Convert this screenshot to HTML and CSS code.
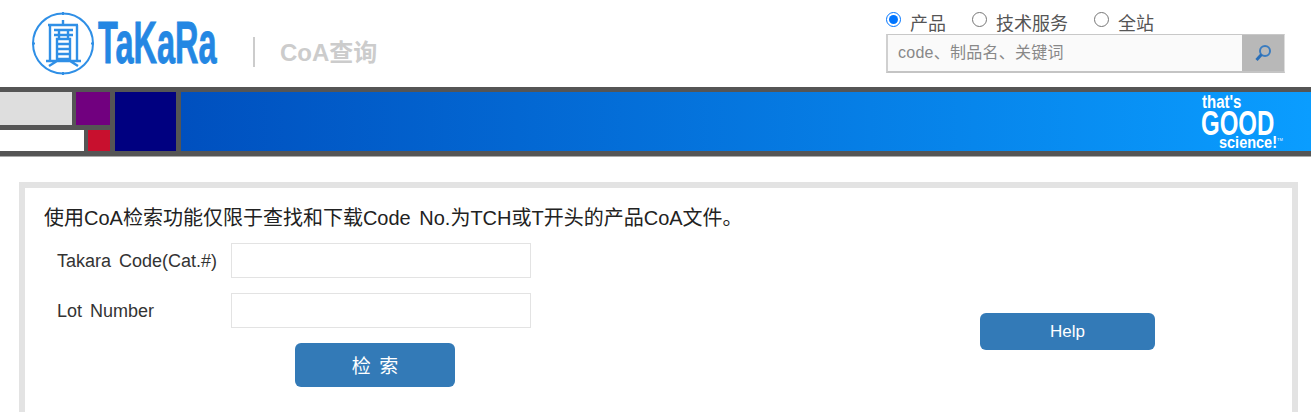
FILE: index.html
```html
<!DOCTYPE html>
<html>
<head>
    <meta charset="utf-8">
    <title>CoA查询</title>
    <link rel="stylesheet" href="styles.css">
</head>
<body>
    <div class="header">
        <svg class="logo" width="190" height="64" viewBox="0 0 190 64">
            <g class="emblem">
                <circle cx="33" cy="32.5" r="30"/>
                <path class="emblem-ticks" d="M33 1v3M33 61v3M2 32.5h3M61 32.5h3"/>
                <path class="emblem-glyph" d="M33 9v5M18 14h30M20 14v36M47 14v36M24 19h19M24 24h19M29 19v8M38 19v8M27 28h13v20h-13zM27 33h13M27 38h13M27 43h13M16 50h35M27 50l-8 5M40 50l8 5"/>
            </g>
            <text class="logo-word" transform="translate(68 52) scale(1 1.8)">TaKaRa</text>
        </svg>
        <div class="divider"></div>
        <div class="page-title">CoA查询</div>
        <div class="search">
            <div class="scope">
                <label class="scope-item"><input type="radio" name="scope" checked>产品</label>
                <label class="scope-item"><input type="radio" name="scope">技术服务</label>
                <label class="scope-item"><input type="radio" name="scope">全站</label>
            </div>
            <div class="search-box">
                <input class="search-input" type="text" placeholder="code、制品名、关键词">
                <div class="search-btn">
                    <svg width="18" height="18" viewBox="0 0 18 18">
                        <circle cx="11" cy="7" r="5" class="lens"/>
                        <path d="M7.5 10.5L2.5 16" class="handle"/>
                    </svg>
                </div>
            </div>
        </div>
    </div>

    <div class="banner">
        <div class="tiles">
            <div class="tile tile-grey"></div>
            <div class="tile tile-purple"></div>
            <div class="tile tile-white"></div>
            <div class="tile tile-red"></div>
        </div>
        <div class="tile-navy"></div>
        <div class="banner-main">
            <svg class="slogan" width="84" height="59" viewBox="0 0 84 59">
                <text class="slogan-that" transform="translate(2 16) scale(1 1.2)">that's</text>
                <text class="slogan-good" transform="translate(1 43) scale(1 1.45)">GOOD</text>
                <text class="slogan-science" transform="translate(19 56) scale(1 1.1)">science!</text>
                <text class="slogan-tm" x="77" y="49">TM</text>
            </svg>
        </div>
    </div>

    <div class="panel">
        <p class="notice">使用CoA检索功能仅限于查找和下载Code No.为TCH或T开头的产品CoA文件。</p>
        <div class="panel-body">
            <form class="coa-form">
                <div class="form-row">
                    <label class="form-label">Takara Code(Cat.#)</label>
                    <input class="form-input" type="text">
                </div>
                <div class="form-row">
                    <label class="form-label">Lot Number</label>
                    <input class="form-input" type="text">
                </div>
                <button class="btn btn-search" type="button">检 索</button>
            </form>
            <button class="btn btn-help" type="button">Help</button>
        </div>
    </div>
</body>
</html>
```

FILE: styles.css
```css
html, body {
    margin: 0;
    height: 412px;
    overflow: hidden;
    background: #ffffff;
}

body {
    font-family: "Liberation Sans", "Noto Sans CJK SC", sans-serif;
}

.header {
    display: flex;
    height: 87px;
    box-sizing: border-box;
    padding-left: 30px;
}

.logo {
    margin-top: 11px;
}

.logo .emblem {
    fill: none;
    stroke: #2f8fe6;
    stroke-width: 2;
}

.emblem-glyph {
    stroke-width: 2.4;
}

.logo-word {
    font-family: "Liberation Sans", sans-serif;
    font-size: 32.5px;
    font-weight: bold;
    fill: #2487e3;
    stroke: #2487e3;
    stroke-width: 0.5;
}

.divider {
    width: 2px;
    height: 30px;
    margin: 37px 0 0 33px;
    background: #cccccc;
}

.page-title {
    margin: 37px 0 0 25px;
    font-size: 24px;
    line-height: 32px;
    font-weight: bold;
    color: #cccccc;
}

.search {
    margin-left: auto;
    margin-right: 26px;
    width: 399px;
}

.scope {
    display: flex;
    height: 34px;
    padding-top: 10px;
    box-sizing: border-box;
    gap: 26px;
}

.scope-item {
    display: flex;
    align-items: center;
    height: 24px;
    font-size: 18px;
    color: #555555;
}

.scope-item input {
    width: 15px;
    height: 15px;
    margin: 0 9px 5px 0;
}

.search-box {
    display: flex;
    height: 39px;
    box-sizing: border-box;
    border: 1px solid #dddddd;
    border-top-color: #c8c8c8;
    border-left: 2px solid #d0d0d0;
    border-bottom: 2px solid #c4c4c4;
}

.search-input {
    flex: 1;
    min-width: 0;
    padding: 0 0 1px 10px;
    border: 0;
    outline: 0;
    font-family: inherit;
    font-size: 16px;
    letter-spacing: 0.25px;
    background-color: #fafafa;
}

.search-input::placeholder {
    color: #888888;
}

.search-btn {
    display: flex;
    align-items: center;
    justify-content: center;
    width: 42px;
    background: #b8b8b8;
}

.lens {
    fill: none;
    stroke: #3a7cc0;
    stroke-width: 2;
}

.handle {
    fill: none;
    stroke: #2a6fb8;
    stroke-width: 3;
}

.banner {
    display: flex;
    gap: 5px;
    height: 70px;
    box-sizing: border-box;
    padding: 5px 0;
    background: #555555;
    border-bottom: 1px solid #aaaaaa;
}

.tiles {
    display: grid;
    grid-template-columns: 72px 12px 22px 4px;
    grid-template-rows: 33px 21px;
    gap: 5px 0;
    width: 110px;
}

.tile-grey {
    grid-column: 1;
    background: #dedede;
}

.tile-purple {
    grid-column: 2 / 5;
    margin-left: 4px;
    background: #71007f;
}

.tile-white {
    grid-column: 1 / 3;
    background: #ffffff;
}

.tile-red {
    grid-column: 3 / 5;
    margin-left: 4px;
    background: #c8102e;
}

.tile-navy {
    width: 61px;
    background: #000080;
}

.banner-main {
    flex: 1;
    display: flex;
    justify-content: flex-end;
    background: linear-gradient(to right, #0050bf, #0a9dff);
    padding-right: 27px;
}

.slogan text {
    fill: #ffffff;
    font-family: "Liberation Sans", sans-serif;
    font-weight: bold;
}

.slogan .slogan-that {
    font-size: 15px;
}

.slogan .slogan-good {
    font-size: 24px;
}

.slogan .slogan-science {
    font-size: 14.5px;
}

.slogan .slogan-tm {
    font-size: 4px;
    font-weight: normal;
}

.panel {
    height: 300px;
    margin: 25px 13px 0 19px;
    border: 6px solid #e3e3e3;
    padding: 17px 19px 0;
    background: #ffffff;
}

.notice {
    margin: 0;
    font-size: 20px;
    line-height: 26px;
    color: #222222;
    word-spacing: 3px;
}

.panel-body {
    display: flex;
    align-items: flex-start;
}

.coa-form {
    width: 488px;
    padding-top: 12px;
}

.form-row {
    display: flex;
    align-items: center;
    height: 35px;
    margin-bottom: 15px;
}

.form-label {
    width: 187px;
    padding: 1px 0 0 13px;
    box-sizing: border-box;
    font-size: 18px;
    color: #333333;
    word-spacing: 3px;
}

.form-input {
    width: 300px;
    height: 35px;
    box-sizing: border-box;
    border: 1px solid #e3e3e3;
    outline: 0;
    background: #ffffff;
}

.btn {
    border: 0;
    border-radius: 6px;
    background: #337ab7;
    color: #ffffff;
    font-family: inherit;
}

.btn-search {
    display: block;
    width: 160px;
    height: 44px;
    margin-left: 251px;
    padding-bottom: 3px;
    font-size: 19px;
    word-spacing: 3px;
}

.btn-help {
    width: 175px;
    height: 37px;
    margin: 82px 0 0 448px;
    font-size: 17px;
}
```
